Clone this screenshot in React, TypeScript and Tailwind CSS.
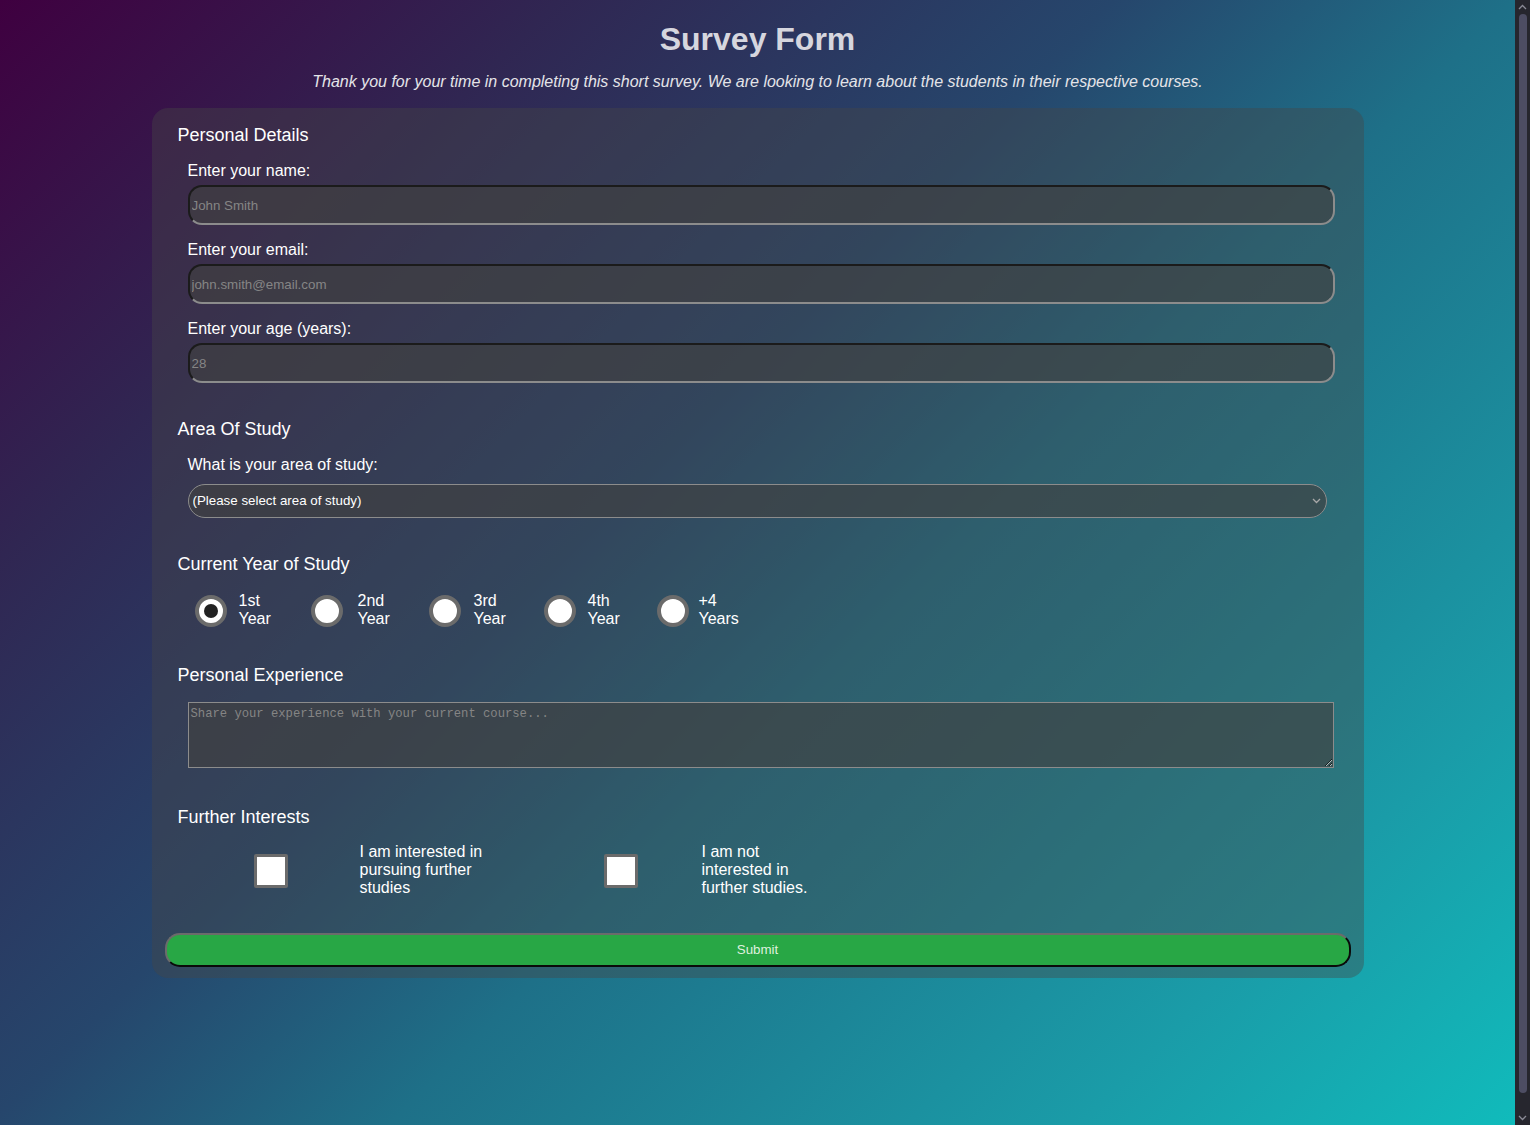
const years = [
    { top: '1st', bottom: 'Year', checked: true, item: 'w-[116px]', gap: 'ml-[12px]' },
    { top: '2nd', bottom: 'Year', checked: false, item: 'w-[118px]', gap: 'ml-[15px]' },
    { top: '3rd', bottom: 'Year', checked: false, item: 'w-[115px]', gap: 'ml-[13px]' },
    { top: '4th', bottom: 'Year', checked: false, item: 'w-[113px]', gap: 'ml-[12px]' },
    { top: '+4', bottom: 'Years', checked: false, item: 'w-[116px]', gap: 'ml-[10px]' },
];

function Heading({ children, className = '' }: { children: React.ReactNode; className?: string }) {
    return <h3 className={`pl-[26px] text-[18px] leading-[21px] text-white ${className}`}>{children}</h3>;
}

function Field({ label, placeholder, type }: { label: string; placeholder: string; type: string }) {
    return (
        <div className="ml-[36px] mr-[29px] mt-[16px] flex flex-col">
            <label className="text-[16px] leading-[18px] text-white">{label}</label>
            <input
                type={type}
                placeholder={placeholder}
                className="mt-[5px] h-[40px] rounded-[14px] border-2 border-t-[#1b1b1b] border-l-[#1b1b1b] border-b-[#8c8c8c] border-r-[#8c8c8c] bg-[#404040]/65 pl-[2px] text-[13.33px] text-white placeholder:text-[#858585] outline-none"
            />
        </div>
    );
}

function ScrollBar() {
    return (
        <aside className="flex h-[1125px] w-[15px] flex-col items-center bg-[#26262e]">
            <svg className="mt-[4px]" width="9" height="6" viewBox="0 0 9 6" fill="none">
                <path d="M1 5l3.5-3.5L8 5" stroke="#8a8a96" strokeWidth="1.3" />
            </svg>
            <div className="mt-[4px] w-[8px] flex-1 rounded-full bg-[#4d4d63]" />
            <svg className="mb-[4px] mt-[22px]" width="9" height="6" viewBox="0 0 9 6" fill="none">
                <path d="M1 1l3.5 3.5L8 1" stroke="#8a8a96" strokeWidth="1.3" />
            </svg>
        </aside>
    );
}

export default function App() {
    return (
        <div className="flex items-start font-['Liberation_Sans',Arial,sans-serif]">
            <main className="h-[1140px] w-[1515px] bg-[linear-gradient(135deg,#3f0040_0%,#302652_21%,#26466c_42%,#1e7088_57%,#1a9ca8_83%,#10bcbc_100%)]">
                <h1 className="pt-[21px] text-center text-[32px] font-bold leading-[37px] text-[#d6d6de]">Survey Form</h1>
                <p className="mt-[15px] text-center text-[16px] italic leading-[18px] text-[#e4e4e8]">
                    Thank you for your time in completing this short survey. We are looking to learn about the students in their respective courses.
                </p>

                <form className="mx-auto mt-[17px] flex w-4/5 flex-col rounded-2xl bg-[#474747]/40 pt-[17px] pb-[11px]">
                    <Heading>Personal Details</Heading>
                    <Field label="Enter your name:" placeholder="John Smith" type="text" />
                    <Field label="Enter your email:" placeholder="john.smith@email.com" type="email" />
                    <Field label="Enter your age (years):" placeholder="28" type="number" />

                    <Heading className="mt-[36px]">Area Of Study</Heading>
                    <div className="ml-[36px] mr-[37px] mt-[16px] flex flex-col">
                        <label className="text-[16px] leading-[18px] text-white">What is your area of study:</label>
                        <div className="relative mt-[10px]">
                            <select className="h-[34px] w-full appearance-none rounded-full border border-[#8c8c8c] bg-[#404040]/65 pl-[4px] text-[13.33px] text-white outline-none">
                                <option>(Please select area of study)</option>
                                <option>Engineering</option>
                                <option>Science</option>
                                <option>Arts</option>
                            </select>
                            <svg className="pointer-events-none absolute right-[6px] top-[14px]" width="9" height="6" viewBox="0 0 9 6" fill="none">
                                <path d="M1 1l3.5 3.5L8 1" stroke="#a8a8a8" strokeWidth="1.3" />
                            </svg>
                        </div>
                    </div>

                    <Heading className="mt-[36px]">Current Year of Study</Heading>
                    <div className="ml-[43px] mt-[17px] flex">
                        {years.map((y) => (
                            <div key={y.top} className={`flex items-start ${y.item}`}>
                                <span className="mt-[3px] flex h-[32px] w-[32px] items-center justify-center rounded-full border-4 border-[#6b6b6b] bg-white">
                                    {y.checked && <span className="h-[14px] w-[14px] rounded-full bg-[#222]" />}
                                </span>
                                <span className={`text-[16px] leading-[18px] text-white ${y.gap}`}>
                                    {y.top}
                                    <br />
                                    {y.bottom}
                                </span>
                            </div>
                        ))}
                    </div>

                    <Heading className="mt-[37px]">Personal Experience</Heading>
                    <textarea
                        placeholder="Share your experience with your current course..."
                        className="ml-[36px] mr-[30px] mt-[16px] h-[66px] border border-[#8c8c8c] bg-[#404040]/65 px-[2px] py-[2px] font-['Liberation_Mono',monospace] text-[12.2px] text-white placeholder:text-[#858585] outline-none"
                    />

                    <Heading className="mt-[39px]">Further Interests</Heading>
                    <div className="ml-[26px] mt-[15px] flex items-center">
                        <span className="ml-[76px] mt-[2px] h-[34px] w-[34px] rounded-[2px] border-[3px] border-[#6b6b6b] bg-white" />
                        <span className="ml-[72px] w-[128px] text-[16px] leading-[18px] text-white">I am interested in pursuing further studies</span>
                        <span className="ml-[116px] mt-[2px] h-[34px] w-[34px] rounded-[2px] border-[3px] border-[#6b6b6b] bg-white" />
                        <span className="ml-[64px] w-[128px] text-[16px] leading-[18px] text-white">I am not interested in further studies.</span>
                    </div>

                    <button
                        type="button"
                        className="mx-[13px] mt-[36px] h-[34px] rounded-[15px] border-2 border-t-[#6b6b6b] border-l-[#6b6b6b] border-b-[#0a0a0a] border-r-[#0a0a0a] bg-[#28a745] text-[13.33px] text-[#dff0df]"
                    >
                        Submit
                    </button>
                </form>
            </main>
            <ScrollBar />
        </div>
    );
}
